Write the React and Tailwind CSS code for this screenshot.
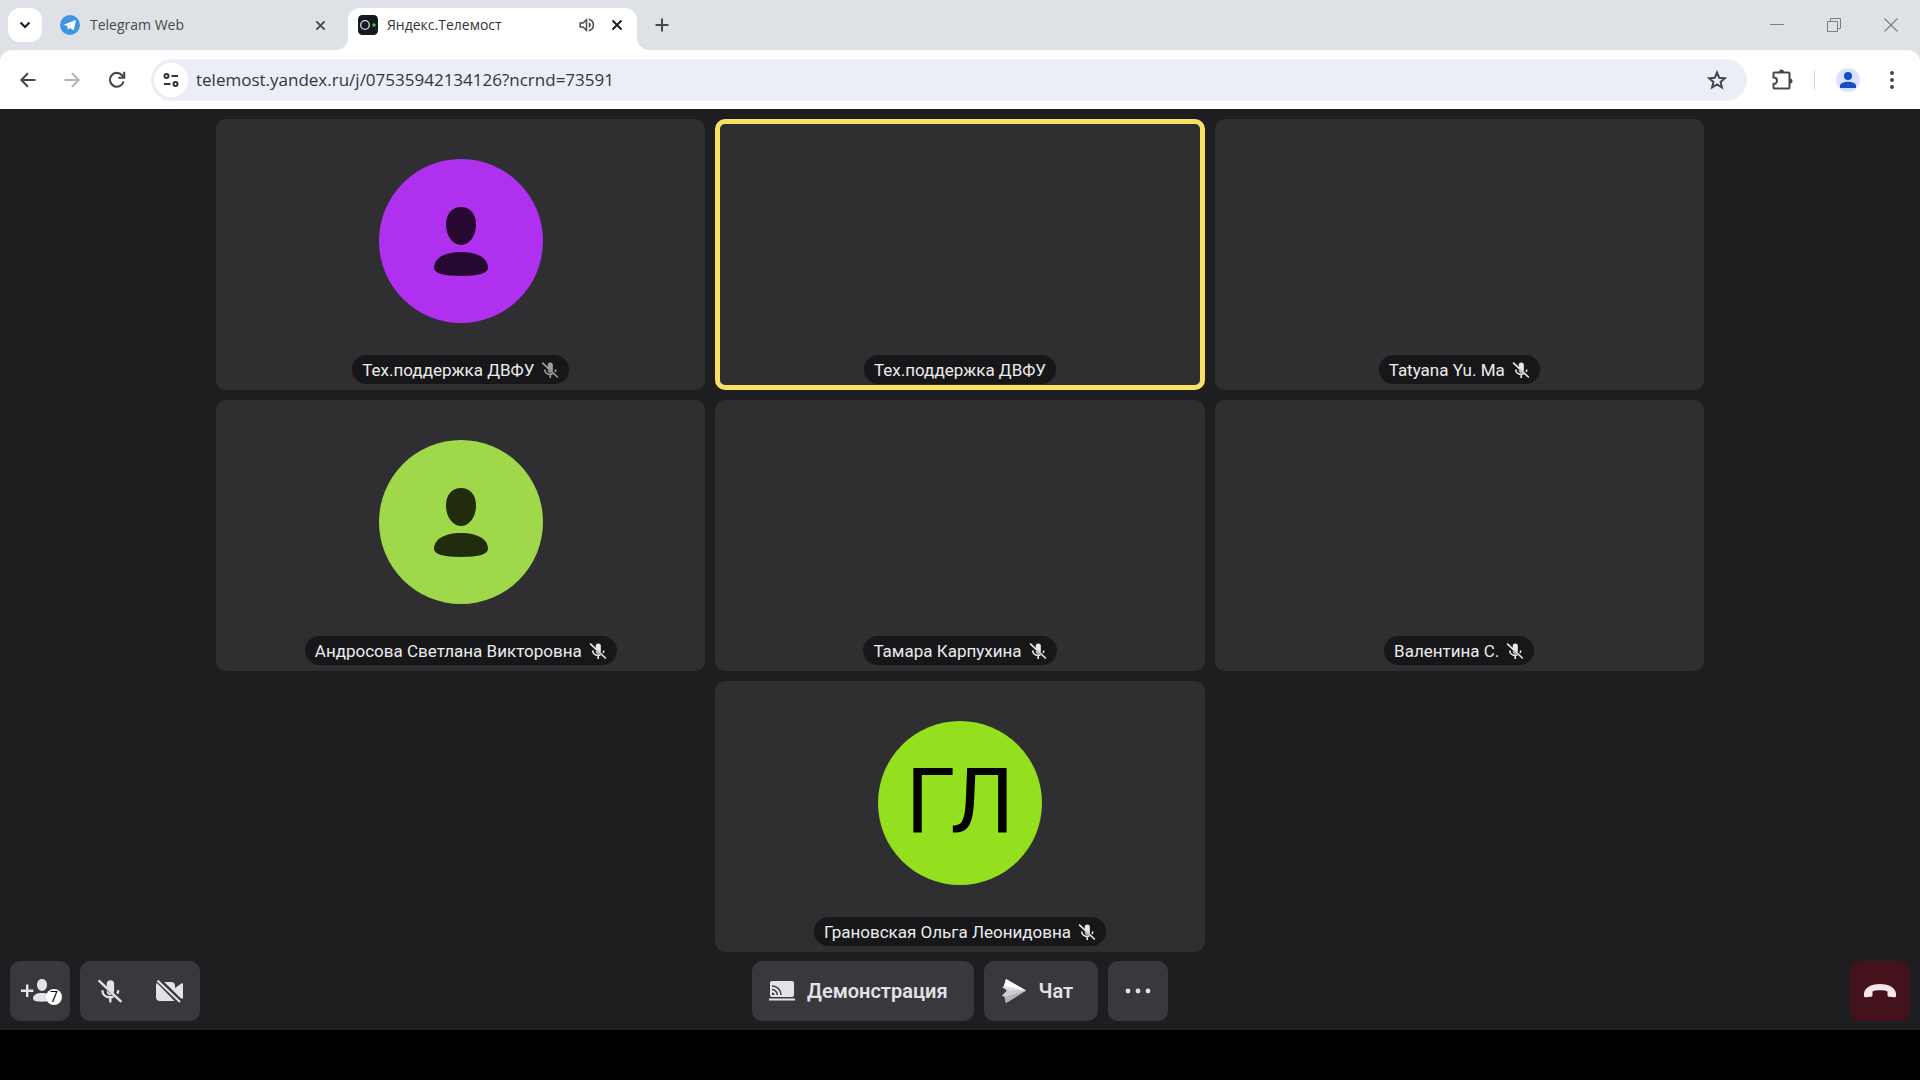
import React from "react";

function MicOff({ className }) {
  return (
    <svg viewBox="0 0 24 24" className={className} fill="none" aria-hidden="true">
      <path d="M9 8.6V5.4a3.4 3.4 0 0 1 6.8 0v6.2c0 .9-.3 1.6-.8 2.2z" fill="currentColor" />
      <path d="M5 11.2c0 4 3 6.6 7 6.6 1.200 0 2.300-.2 3.300-.7M19.600 11.200c0 1.200-.3 2.300-.8 3.200M12.300 18v4.600" stroke="currentColor" strokeWidth="2.200" />
      <path d="M9 11.500l4.800 4.300c-2.600.7-4.800-1-4.800-3.400z" fill="currentColor" />
      <path d="M1.500 2.200L22.500 22" stroke="currentColor" strokeWidth="2.200" />
    </svg>
  );
}

function CameraOff({ className }) {
  return (
    <svg viewBox="0 0 28 24" className={className} fill="currentColor" aria-hidden="true">
      <path d="M1 4c-.6.600-1 1.400-1 2.400V18a4 4 0 0 0 4 4h14.500z" />
      <path d="M8.200 3H15a4 4 0 0 1 4 4v2l6-4.200c1.300-.9 2-.5 2 1v12.500c0 1.500-.7 1.900-2 1l-1-.7z" />
      <path d="M1.500 1.500L24 23" fill="none" stroke="currentColor" strokeWidth="2" />
    </svg>
  );
}

function Person({ className }) {
  return (
    <svg viewBox="0 0 54 69" className={className} fill="currentColor" aria-hidden="true">
      <path d="M27 0c9 0 15 6.500 15 17.500C42 29.500 35 38 27 38S12 29.500 12 17.500C12 6.500 18 0 27 0z" />
      <path d="M27 45c16 0 27 6 27 16 0 5-9 8-27 8S0 66 0 61c0-10 11-16 27-16z" />
    </svg>
  );
}

function TabClose({ className }) {
  return (
    <svg viewBox="0 0 12 12" className={className} fill="none" stroke="currentColor" strokeWidth="2" aria-hidden="true">
      <path d="M1.500 1.500l9 9M10.500 1.500l-9 9" />
    </svg>
  );
}

function BrowserTabs() {
  return (
    <div className="flex h-[50px] items-center bg-[#dee2e6] pl-2 text-[#45494d]">
      <button aria-label="Поиск вкладок" className="flex size-[34px] items-center justify-center rounded-xl bg-white text-[#1f1f1f]">
        <svg viewBox="0 0 12 8" className="h-2 w-3" fill="none" stroke="currentColor" strokeWidth="2.200" aria-hidden="true">
          <path d="M1.500 1.500L6 6l4.500-4.500" />
        </svg>
      </button>
      <div className="flex w-[306px] items-center pr-[22px] pl-[18px]">
        <svg viewBox="0 0 20 20" className="size-5 shrink-0" aria-hidden="true">
          <circle cx="10" cy="10" r="10" fill="#3d96e4" />
          <path d="M3.800 9.700L15 5.200c.5-.2.900.1.800.7l-1.900 8.700c-.1.600-.6.800-1.100.4L10 12.900l-1.400 1.400c-.3.300-.7.200-.8-.3l-.6-3-3.200-1c-.5-.1-.5-.2-.2-.3z" fill="#fff" />
          <path d="M7.300 11l6-4-4.800 4.800-.4 2.300z" fill="#b9d8f3" />
        </svg>
        <span className="ml-[10px] flex-1 text-sm">Telegram Web</span>
        <button aria-label="Закрыть вкладку Telegram Web"><TabClose className="size-[11px]" /></button>
      </div>
      <div className="relative mt-2 flex h-[42px] w-[289px] items-center rounded-t-xl bg-white pr-[14px] pb-2 pl-[10px]">
        <span className="absolute bottom-0 -left-3 size-3 bg-[radial-gradient(circle_at_0_0,transparent_12px,white_12px)]" />
        <span className="absolute -right-3 bottom-0 size-3 bg-[radial-gradient(circle_at_100%_0,transparent_12px,white_12px)]" />
        <svg viewBox="0 0 20 20" className="size-5 shrink-0" aria-hidden="true">
          <rect width="20" height="20" rx="4.500" fill="#15191d" />
          <circle cx="7" cy="10" r="4.300" fill="none" stroke="#d9dde0" strokeWidth="1.300" />
          <circle cx="16" cy="10" r="1.700" fill="#2bd837" />
        </svg>
        <span className="ml-[9px] flex-1 text-sm text-[#333]">Яндекс.Телемост</span>
        <button aria-label="Отключить звук на вкладке">
          <svg viewBox="0 0 16 16" className="size-4" fill="none" stroke="currentColor" strokeWidth="1.500" aria-hidden="true">
            <path d="M1.200 6v4H4l3.500 3.300V2.700L4 6z" />
            <path d="M9.800 5.200v5.600c1.300-.5 2-1.500 2-2.800s-.7-2.300-2-2.800z" fill="currentColor" stroke="none" />
            <path d="M9.800 2.200c2.900.8 4.600 3 4.600 5.800s-1.700 5-4.600 5.800" />
          </svg>
        </button>
        <button aria-label="Закрыть вкладку Яндекс.Телемост" className="ml-[16px] text-[#1f1f1f]"><TabClose className="size-3" /></button>
      </div>
      <button aria-label="Новая вкладка" className="ml-[18px]">
        <svg viewBox="0 0 14 14" className="size-[14px]" stroke="currentColor" strokeWidth="2" aria-hidden="true">
          <path d="M7 .5v13M.5 7h13" />
        </svg>
      </button>
      <div className="ml-auto flex items-center gap-[43px] pr-[22px] text-[#7b7f83]">
        <button aria-label="Свернуть">
          <svg viewBox="0 0 14 14" className="size-[14px]" stroke="currentColor" aria-hidden="true"><path d="M0 6.500h14" /></svg>
        </button>
        <button aria-label="Восстановить">
          <svg viewBox="0 0 14 14" className="size-[14px]" fill="none" stroke="currentColor" aria-hidden="true"><path d="M.5 3.500h10v10H.5zM3.500 3.500v-3h10v10h-3" /></svg>
        </button>
        <button aria-label="Закрыть">
          <svg viewBox="0 0 14 14" className="size-[14px]" stroke="currentColor" strokeWidth="1.200" aria-hidden="true"><path d="M.5.5l13 13M13.500.5l-13 13" /></svg>
        </button>
      </div>
    </div>
  );
}

function BrowserToolbar() {
  return (
    <div className="bg-[#dee2e6]">
      <div className="flex h-[59px] items-center rounded-t-xl bg-white px-[18px] text-[#45484b]">
        <button aria-label="Назад">
          <svg viewBox="0 0 20 20" className="size-5" fill="none" stroke="currentColor" strokeWidth="2" aria-hidden="true"><path d="M17.500 10H4M10 3.300L3.300 10l6.700 6.700" /></svg>
        </button>
        <button aria-label="Вперёд" className="ml-6 text-[#b4b6b8]">
          <svg viewBox="0 0 20 20" className="size-5" fill="none" stroke="currentColor" strokeWidth="2" aria-hidden="true"><path d="M2.500 10H16M10 3.300l6.700 6.700-6.700 6.700" /></svg>
        </button>
        <button aria-label="Обновить" className="ml-[25px]">
          <svg viewBox="0 0 20 20" className="size-5" fill="none" stroke="currentColor" strokeWidth="2.100" aria-hidden="true"><path d="M16.500 11.500A6.900 6.900 0 1 1 15 5.200l2 2.200M17.200 1.800v6h-6" /></svg>
        </button>
        <div className="ml-6 flex h-[42px] flex-1 items-center rounded-full bg-[#ebeef7] pr-5 pl-[3px]">
          <button aria-label="Сведения о сайте" className="flex size-[34px] items-center justify-center rounded-full bg-white text-[#333]">
            <svg viewBox="0 0 16 14" className="h-[14px] w-4" fill="none" stroke="currentColor" strokeWidth="2" aria-hidden="true">
              <circle cx="3.500" cy="3" r="2" /><path d="M8.500 3H15M1 11h6.500" /><circle cx="12.500" cy="11" r="2" />
            </svg>
          </button>
          <input aria-label="Адресная строка" defaultValue="telemost.yandex.ru/j/07535942134126?ncrnd=73591" className="ml-2 h-8 min-w-0 flex-1 bg-transparent text-[17px] text-[#333639] outline-none" />
          <button aria-label="Добавить в закладки">
            <svg viewBox="0 0 20 20" className="size-5" fill="none" stroke="currentColor" strokeWidth="2" aria-hidden="true"><path d="M10 2.500l2.200 5.200 5.700.5-4.300 3.700 1.300 5.600L10 14.500l-4.900 3 1.300-5.600-4.300-3.700 5.700-.5z" /></svg>
          </button>
        </div>
        <button aria-label="Расширения" className="ml-6">
          <svg viewBox="0 0 22 22" className="size-[22px]" fill="none" stroke="currentColor" strokeWidth="2" aria-hidden="true">
            <path d="M3.500 3.500h14a1 1 0 0 1 1 1v14a1 1 0 0 1-1 1h-14a1 1 0 0 1-1-1V15c2 0 3.500-1.500 3.500-3.300S4.500 8.500 2.500 8.500v-4a1 1 0 0 1 1-1z" />
            <path d="M8 3a2.500 2.500 0 0 1 5 0zM19 9.500a2.500 2.500 0 0 1 0 5z" fill="currentColor" stroke="none" />
          </svg>
        </button>
        <span className="ml-[21px] h-5 w-px bg-[#cfd8e4]" />
        <button aria-label="Профиль" className="ml-[21px] flex size-6 items-center justify-center rounded-full bg-[#d5e3fc] text-[#1450c4]">
          <svg viewBox="0 0 16 16" className="size-4" fill="currentColor" aria-hidden="true"><circle cx="8" cy="4" r="4" /><path d="M0 16v-2.500C0 11 4.500 9.700 8 9.700s8 1.300 8 3.800V16z" /></svg>
        </button>
        <button aria-label="Меню" className="ml-[22px]">
          <svg viewBox="0 0 20 20" className="size-5" fill="currentColor" aria-hidden="true"><circle cx="10" cy="3" r="2" /><circle cx="10" cy="10" r="2" /><circle cx="10" cy="17" r="2" /></svg>
        </button>
      </div>
    </div>
  );
}

function Tile({ name, muted = true, dim = false, speaking = false, last = false, children }) {
  return (
    <li className={`relative flex aspect-[489/271] flex-col items-center rounded-[10px] bg-[#2f2f32] pt-10 ${last ? "col-start-2" : ""}`}>
      {speaking && <span className="absolute inset-0 rounded-[10px] border-5 border-[#f9e062]" />}
      {children}
      <div className="mt-auto mb-[6px] flex h-[29px] items-center gap-[7px] rounded-full bg-[#171719] px-[10px]">
        <span className="text-[17px] leading-6 whitespace-nowrap text-[#ececee]">{name}</span>
        {muted && <MicOff className={`size-[18px] ${dim ? "text-[#a0a0a3]" : "text-[#e8e8ea]"}`} />}
      </div>
    </li>
  );
}

function Participants() {
  return (
    <ul className="mx-auto grid w-[78.3%] grid-cols-3 gap-[10px]">
      <Tile name="Тех.поддержка ДВФУ" dim>
        <div className="flex size-[164px] items-center justify-center rounded-full bg-[#b030f0] text-[#260830]"><Person className="h-[69px] w-[54px]" /></div>
      </Tile>
      <Tile name="Тех.поддержка ДВФУ" muted={false} speaking />
      <Tile name="Tatyana Yu. Ma" />
      <Tile name="Андросова Светлана Викторовна">
        <div className="flex size-[164px] items-center justify-center rounded-full bg-[#a0d84c] text-[#202c0c]"><Person className="h-[69px] w-[54px]" /></div>
      </Tile>
      <Tile name="Тамара Карпухина" />
      <Tile name="Валентина С." />
      <Tile name="Грановская Ольга Леонидовна" last>
        <div className="flex size-[164px] items-center justify-center rounded-full bg-[#94e01e] text-[90px] leading-none text-black">ГЛ</div>
      </Tile>
    </ul>
  );
}

function CallControls() {
  return (
    <div className="mt-[9px] grid grid-cols-[1fr_auto_1fr] items-center text-[#e4e2e8]">
      <div className="flex gap-[10px]">
        <button aria-label="Участники: 7" className="relative flex size-[60px] items-center justify-center rounded-[10px] bg-[#39383d]">
          <svg viewBox="0 0 40 24" className="h-6 w-10" fill="currentColor" aria-hidden="true">
            <path d="M1 10.500h5v-5h2.400v5h5v2.400h-5v5H6v-5H1z" />
            <path d="M22 0c3 0 5 2.200 5 5.800S24.700 12 22 12s-5-2.600-5-6.200S19 0 22 0z" />
            <path d="M22 14c5.500 0 9 2 9 5.300 0 2.500-3 3.400-9 3.400s-9-.9-9-3.400C13 16 16.500 14 22 14z" />
          </svg>
          <span className="absolute right-2 bottom-4 flex size-4 items-center justify-center rounded-full bg-white text-sm leading-none text-black">7</span>
        </button>
        <div className="flex rounded-[10px] bg-[#39383d]">
          <button aria-label="Включить микрофон" className="flex size-[60px] items-center justify-center"><MicOff className="size-[26px]" /></button>
          <button aria-label="Включить камеру" className="flex size-[60px] items-center justify-center"><CameraOff className="h-6 w-7" /></button>
        </div>
      </div>
      <div className="flex gap-[10px] text-xl font-semibold">
        <button className="flex h-[60px] items-center gap-3 rounded-[10px] bg-[#39383d] pr-[26px] pl-[17px]">
          <svg viewBox="0 0 26 20" className="h-5 w-[26px]" aria-hidden="true">
            <rect x="1" width="24" height="16" rx="2" fill="currentColor" /><rect y="17.500" width="26" height="2" fill="currentColor" />
            <path d="M3 5c5 0 9 3.700 9 9M3 8.600c3 0 5.300 2.400 5.300 5.400" fill="none" stroke="#39383d" strokeWidth="1.500" /><path d="M3 11.500a2.500 2.500 0 0 1 2.500 2.500H3z" fill="#39383d" />
          </svg>
          Демонстрация
        </button>
        <button className="flex h-[60px] items-center gap-3 rounded-[10px] bg-[#39383d] pr-[25px] pl-[18px]">
          <svg viewBox="0 0 25 24" className="h-6 w-[25px]" aria-hidden="true">
            <path d="M4 0l20 11.500L4 24l-1.500-6.500L0 17l5-5.500L0 8l2-1z" fill="#dcdbde" />
            <path d="M4 0l20 11.500L2 7z" fill="#fff" />
            <path d="M24 11.500L0 17l5-5.500z" fill="#cbc9cd" />
            <path d="M24 11.500L4 24l-1.500-6.500z" fill="#b4b2b7" />
          </svg>
          Чат
        </button>
        <button aria-label="Ещё" className="flex size-[60px] items-center justify-center rounded-[10px] bg-[#39383d]">
          <svg viewBox="0 0 26 6" className="h-[6px] w-[26px]" fill="currentColor" aria-hidden="true"><circle cx="3" cy="3" r="2.400" /><circle cx="13" cy="3" r="2.400" /><circle cx="23" cy="3" r="2.400" /></svg>
        </button>
      </div>
      <button aria-label="Завершить встречу" className="flex size-[60px] items-center justify-center justify-self-end rounded-[10px] bg-[#43121a] text-[#f3e6ee]">
        <svg viewBox="0 0 32 14" className="h-[14px] w-8" fill="currentColor" aria-hidden="true"><path d="M0 10C0 4 7 0 16 0s16 4 16 10v2c0 1-1 1.500-2 1.300l-5-.6c-1-.1-1.500-.7-1.500-1.700V7.500C21.500 5.800 10.500 5.800 8.500 7.500V11c0 1-.5 1.600-1.500 1.700l-5 .6c-1 .2-2-.3-2-1.300z" /></svg>
      </button>
    </div>
  );
}

export default function App() {
  return (
    <div className="min-h-screen bg-black">
      <header className="font-['Open_Sans',sans-serif]">
        <BrowserTabs />
        <BrowserToolbar />
      </header>
      <main className="bg-[#1e1e20] px-[10px] pt-[10px] pb-[9px] font-[Roboto,sans-serif]">
        <Participants />
        <CallControls />
      </main>
    </div>
  );
}
